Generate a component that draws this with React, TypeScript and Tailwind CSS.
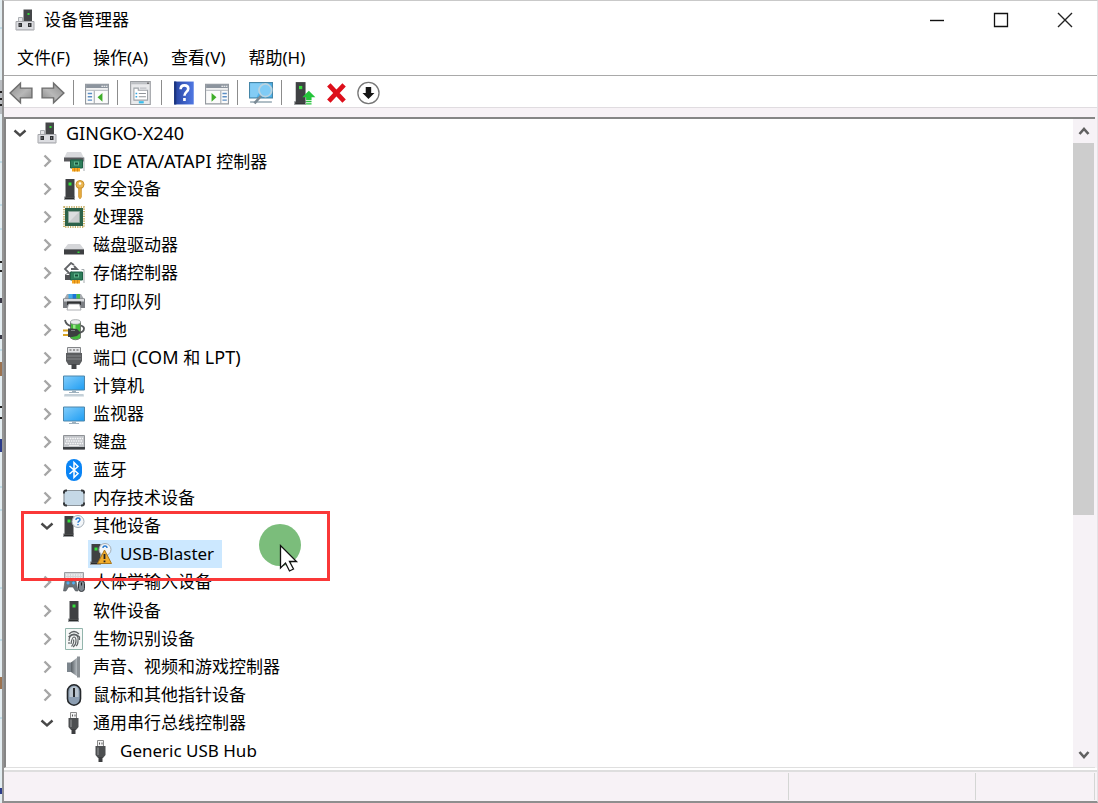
import type { ReactNode } from "react";
import clsx from "clsx";

type Device = {
  name: ReactNode;
  icon: ReactNode;
  level: 0 | 1 | 2;
  open?: boolean;
  selected?: boolean;
  marked?: boolean;
};

function Icon({ children, size = 22 }: { children: ReactNode; size?: number }) {
  return (
    <svg width={size} height={size} viewBox="0 0 22 22" fill="none" aria-hidden="true" className="shrink-0">
      {children}
    </svg>
  );
}

/* ---------- shared icon parts ---------- */

function Tower({ x = 0 }: { x?: number }) {
  return (
    <g transform={`translate(${x} 0)`}>
      <path d="M0 18.500h11V22H0z" fill="#9a9da0" />
      <path d="M1.500 1h9v18.500h-9z" fill="#3f4143" />
      <path d="M1 19.500h9v1.500H1z" fill="#2b2c2d" />
      <path d="M4.500 4.500h3v3h-3z" fill="#34e03c" />
    </g>
  );
}

function Card() {
  return (
    <>
      <path d="M7.500 10h12v8h-12z" fill="#2d7d5a" stroke="#1d6044" />
      <path d="M11 11.500h5v4h-5z" fill="#5fb98d" />
      <path d="M12 12.500h3v2h-3z" fill="#174d37" />
      <path d="M9 18h8v3.500H9z" fill="#f5a623" />
      <path d="M11.500 18v3.500M14.500 18v3.500" stroke="#c77d0c" strokeWidth=".7" />
      <path d="M18.500 7.500h2.500V21" stroke="#a5abae" />
    </>
  );
}

function UsbPlug() {
  return (
    <Icon>
      <path d="M7.500.5h6v6h-6z" fill="#f4f4f4" stroke="#8b8b8b" />
      <path d="M9 2.500h1v2H9zM11.500 2.500h1v2h-1z" fill="#555" />
      <path d="M5.500 6h10v9l-2.500 3H8l-2.500-3z" fill="#4d4f51" />
      <path d="M7 7.500h2V15H7z" fill="#737577" />
      <path d="M8.500 17h4v5h-4z" fill="#3d3e40" />
    </Icon>
  );
}

function Machine() {
  return (
    <Icon>
      <path d="M9.500.5h8.500V13H9.500z" fill="#444648" />
      <path d="M13.500 4h2v2h-2z" fill="#36d63c" />
      <path d="M4.500 8.500h4V13h-4z" fill="#e4e5e7" stroke="#adb0b4" />
      <path d="M2 12.500h18v8.500H2z" fill="#dcdde1" stroke="#a6a7ab" />
      <path d="M4.500 14h3.500v4H4.500zM14 14h3.500v4H14z" fill="#2f3133" />
      <path d="M5.500 15h1v2h-1zM15 15h1v2h-1z" fill="#77797d" />
      <path d="M2.500 20h17v1h-17z" fill="#b9babf" />
    </Icon>
  );
}

function Monitor({ base }: { base?: boolean }) {
  return (
    <Icon>
      <defs>
        <linearGradient id="screen" x1="0" y1="0" x2="1" y2="1">
          <stop offset="0" stopColor="#82cdfb" />
          <stop offset="1" stopColor="#1e9df3" />
        </linearGradient>
      </defs>
      <g transform={base ? "translate(0 -2)" : "translate(0 1)"}>
        <path d="M.5 3h21v14H.5z" fill="url(#screen)" stroke="#4c86ab" />
        <path d="M9 17.500h4V19H9z" fill="#9fb2bf" />
        <path d="M6 19h10v1H6z" fill="#9fb2bf" />
      </g>
      {base && <path d="M1.500 19h19l.5 2.500H1z" fill="#c4d0d8" />}
    </Icon>
  );
}

const IdeIcon = (
  <Icon>
    <path d="M4 2h14l3 6H1z" fill="#d9dadd" />
    <path d="M1 7.500h20v4H1z" fill="#58595c" />
    <Card />
  </Icon>
);

const SecurityIcon = (
  <Icon>
    <Tower x={1} />
    <circle cx="17" cy="6.500" r="4" fill="#eab651" stroke="#c88f2c" />
    <circle cx="17" cy="5.500" r="1.300" fill="#fff" />
    <path d="M15.500 10h3v9L17 21l-1.500-2z" fill="#e5a93c" stroke="#c98e2d" strokeWidth=".6" />
  </Icon>
);

const CpuIcon = (
  <Icon>
    <rect x="1" y="1" width="20" height="20" stroke="#b99a3c" strokeWidth="1.500" strokeDasharray="1.200 1.200" />
    <path d="M2 2h18v18H2z" fill="#2c6249" />
    <path d="M5.500 5.500h11v11h-11z" fill="#dcdede" stroke="#8fa79b" />
    <path d="M6 16 16 6v10z" fill="#c9cccc" />
  </Icon>
);

const DiskIcon = (
  <Icon>
    <path d="M5 10h12l4 5H1z" fill="#d5d6d9" />
    <path d="M1 15h20v5.500H1z" fill="#3e4042" />
    <path d="M1 15h20v1H1z" fill="#76787b" />
    <path d="M14.500 17.500h2v1.500h-2z" fill="#35dc3a" />
  </Icon>
);

const StorageIcon = (
  <Icon>
    <path d="m11 3-3-2-6 6 5 5 2-2M8 7h6l-3-3" stroke="#616366" strokeWidth="1.800" />
    <path d="M2 13h6v5H2z" fill="#505255" />
    <path d="m2 13 3-2 4 4" stroke="#77797c" />
    <Card />
  </Icon>
);

const PrinterIcon = (
  <Icon>
    <path d="M4 3h14l3 5H1z" fill="#a7abb0" />
    <path d="M5.500 3h4v5h-4z" fill="#41a9e8" />
    <path d="M9.500 3h4v5h-4z" fill="#1975da" />
    <path d="M13.500 3h3.500v5h-3.500z" fill="#48bd46" />
    <path d="M0 7.500h22V17H0z" fill="#7b7e83" />
    <path d="M1 8h20v2.500H1z" fill="#d8dadd" />
    <path d="M4 10.500h14V14H4z" fill="#2f3133" />
    <path d="M5.500 13h11l1.500 6H4z" fill="#fff" stroke="#999ca1" strokeWidth=".8" />
  </Icon>
);

const BatteryIcon = (
  <Icon>
    <path d="M7.500 3h10v16q-5 3.500-10 0z" fill="#42b83b" stroke="#6f7b6d" />
    <ellipse cx="12.500" cy="3" rx="5" ry="2.300" fill="#e9ecee" stroke="#84898d" strokeWidth=".7" />
    <path d="M10 6h2.500v7H10z" fill="#9bea8d" />
    <path d="M2 1q1 5 6 6M16 14q5-1 5-4.500 0-2-3-3" stroke="#55585a" strokeWidth="1.800" />
    <path d="M0 11.500h7M0 16h7" stroke="#d9a423" strokeWidth="2" />
    <path d="M5 9.500h4l5 .5 3.500 3.500-3.500 3.500-5 1H5z" fill="#3c3e40" />
    <path d="M8 11.500h4" stroke="#7d8083" />
  </Icon>
);

const PortIcon = (
  <Icon>
    <path d="M4.500.5h13V6h-13z" fill="#e4e5e7" stroke="#838588" />
    <path d="M6.500 2.500h2v1h-2zM10 2.500h2v1h-2zM13.500 2.500h2v1h-2z" fill="#555" />
    <path d="M3 6h16v8l-2.500 4h-11L3 14z" fill="#5b5d5f" />
    <path d="M4 9h14M4 12h14" stroke="#85878a" />
    <path d="M8.500 17h5v5h-5z" fill="#424446" />
  </Icon>
);

const KeyboardIcon = (
  <Icon>
    <path d="M.5 4.500h21V18H.5z" fill="#c3c6ca" stroke="#8f9296" />
    <path d="M2 7.500h18M3 10h17M2 12.500h18" stroke="#f5f6f7" strokeWidth="1.400" strokeDasharray="1.600 .8" />
    <path d="M6 14.500h10" stroke="#eee" />
    <path d="M0 16h22v2.500H0z" fill="#3c3f42" />
  </Icon>
);

const BluetoothIcon = (
  <Icon>
    <rect x="3" y="0" width="16" height="22" rx="8" fill="#0a84f5" />
    <path d="m6.500 7 8.500 7.500-4 4v-15l4 4L6.500 15" stroke="#fff" strokeWidth="1.500" />
  </Icon>
);

const MemoryIcon = (
  <Icon>
    <rect x="1" y="3.500" width="20" height="15" rx="2" fill="#c5d8e6" stroke="#8a939a" strokeWidth="1.200" />
    <path
      d="M1 6.500V5.500q0-2 2-2h1M18 3.500h1q2 0 2 2v1M21 15.500v1q0 2-2 2h-1M4 18.500H3q-2 0-2-2v-1"
      stroke="#35383b"
      strokeWidth="2"
    />
  </Icon>
);

const UnknownIcon = (
  <Icon>
    <Tower />
    <circle cx="15" cy="6.500" r="6" fill="#f3f6f9" stroke="#a3adb6" />
    <path d="M13 5q0-2 2-2t2 1.700c0 1.400-2 1.500-2 3M15 9v1.300" stroke="#2a7bd0" strokeWidth="1.400" />
  </Icon>
);

const WarningIcon = (
  <Icon>
    <Tower />
    <circle cx="15" cy="6.500" r="6" fill="#f3f6f9" stroke="#a3adb6" />
    <path d="M13 5q0-2 2-2t2 2" stroke="#2a7bd0" strokeWidth="1.400" />
    <path d="M14.500 7 21.500 20.500h-14z" fill="#f2ad2c" stroke="#a8761c" strokeLinejoin="round" />
    <path d="M14.500 11v5M14.500 17.500v1.700" stroke="#222" strokeWidth="1.800" />
  </Icon>
);

const HidIcon = (
  <Icon>
    <path d="M1.500 1.500h19v8h-19z" fill="#d2d4d7" stroke="#9b9ea2" />
    <path d="M3 4h16M3 7h16" stroke="#fff" strokeDasharray="1.500 1" />
    <path d="m.5 20 1.500-10L4.500 8h6L13 10l2 10h-2.500l-2.500-4H5.500L3 20z" fill="#6a7279" stroke="#505559" strokeWidth=".6" />
    <path d="M3.500 12h3M9 12h3M5 10.500v3M10.500 10.500v3" stroke="#53aef1" strokeWidth="1.500" />
    <rect x="15.500" y="9.500" width="6" height="11" rx="3" fill="#7e8891" stroke="#32363a" />
    <path d="M18.500 11.500v3" stroke="#222" />
  </Icon>
);

const SoftwareIcon = (
  <Icon>
    <Tower x={5} />
  </Icon>
);

const FingerprintIcon = (
  <Icon>
    <path d="M2.500.5h17v21h-17z" fill="#f6f8f7" stroke="#93b5ac" />
    <path
      d="M6 6q5-5 10 0M5.500 9q5.500-6 11 0v3M6 13q0-6 5-6t4 6q0 4-2 5M8 16q1-7 3-7t2 4q0 4-3 6M10.500 11.500q1 3-2 7M6 14v2"
      stroke="#5d6163"
      strokeWidth="1.200"
    />
  </Icon>
);

const SoundIcon = (
  <Icon>
    <defs>
      <linearGradient id="cone">
        <stop offset="0" stopColor="#596066" />
        <stop offset="1" stopColor="#c5cbd0" />
      </linearGradient>
    </defs>
    <path d="M4 6.500h5V16H4z" fill="#7c858d" />
    <path d="M8 6.500 15 1v20l-7-5z" fill="url(#cone)" />
    <path d="M14 .5h3v21h-3z" fill="#8b9196" />
  </Icon>
);

const MouseIcon = (
  <Icon>
    <rect x="4.500" y=".8" width="13" height="20.400" rx="6.500" fill="#8c9eb2" stroke="#25282b" strokeWidth="1.600" />
    <path d="M6.500 8q0-5 4.500-5.500T15.500 8v5h-9z" fill="#bac5cf" />
    <path d="M11 4v9" stroke="#26292c" strokeWidth="2" />
  </Icon>
);

function Latin({ children }: { children: ReactNode }) {
  return <span className="whitespace-pre text-[18px]">{children}</span>;
}

const devices: Device[] = [
  { name: <Latin>GINGKO-X240</Latin>, icon: <Machine />, level: 0, open: true },
  { name: <><Latin>IDE ATA/ATAPI </Latin>控制器</>, icon: IdeIcon, level: 1 },
  { name: "安全设备", icon: SecurityIcon, level: 1 },
  { name: "处理器", icon: CpuIcon, level: 1 },
  { name: "磁盘驱动器", icon: DiskIcon, level: 1 },
  { name: "存储控制器", icon: StorageIcon, level: 1 },
  { name: "打印队列", icon: PrinterIcon, level: 1 },
  { name: "电池", icon: BatteryIcon, level: 1 },
  { name: <>端口<Latin> (COM </Latin>和<Latin> LPT)</Latin></>, icon: PortIcon, level: 1 },
  { name: "计算机", icon: <Monitor base />, level: 1 },
  { name: "监视器", icon: <Monitor />, level: 1 },
  { name: "键盘", icon: KeyboardIcon, level: 1 },
  { name: "蓝牙", icon: BluetoothIcon, level: 1 },
  { name: "内存技术设备", icon: MemoryIcon, level: 1 },
  { name: "其他设备", icon: UnknownIcon, level: 1, open: true, marked: true },
  { name: "USB-Blaster", icon: WarningIcon, level: 2, selected: true },
  { name: "人体学输入设备", icon: HidIcon, level: 1 },
  { name: "软件设备", icon: SoftwareIcon, level: 1 },
  { name: "生物识别设备", icon: FingerprintIcon, level: 1 },
  { name: "声音、视频和游戏控制器", icon: SoundIcon, level: 1 },
  { name: "鼠标和其他指针设备", icon: MouseIcon, level: 1 },
  { name: "通用串行总线控制器", icon: <UsbPlug />, level: 1, open: true },
  { name: "Generic USB Hub", icon: <UsbPlug />, level: 2 },
];

const indent = ["pl-[3px]", "pl-[30px]", "pl-[82px]"];

function Chevron({ open }: { open?: boolean }) {
  return (
    <Icon>
      {open ? (
        <path d="m5.500 8.500 5.500 5 5.500-5" stroke="#484848" strokeWidth="2.400" />
      ) : (
        <path d="m8.500 5.500 5.500 5.500-5.500 5.500" stroke="#a6a6a6" strokeWidth="2.400" />
      )}
    </Icon>
  );
}

/* Red frame, click highlight and pointer drawn over the tree */
function Marker() {
  return (
    <div className="pointer-events-none absolute -top-px left-[15px] z-10 h-[70px] w-[309px] border-3 border-[#fa3838]">
      <svg width="48" height="54" viewBox="0 0 48 54" className="absolute left-[234px] top-2" aria-hidden="true">
        <circle cx="22" cy="23" r="21" fill="#7bbd7b" />
        <path d="M22.500 23.500v22.500l5-5 4 8 4-2-4-7.500h7z" fill="#fff" stroke="#111" strokeWidth="1.300" />
      </svg>
    </div>
  );
}

function DeviceRow({ device }: { device: Device }) {
  const { name, icon, level, open, selected, marked } = device;
  return (
    <li
      role="treeitem"
      aria-level={level + 1}
      aria-expanded={level < 2 ? !!open : undefined}
      aria-selected={!!selected}
      className={clsx("relative flex items-center", indent[level])}
    >
      {level < 2 && (
        <button type="button" aria-label={open ? "折叠" : "展开"} className="mr-[3px]">
          <Chevron open={open} />
        </button>
      )}
      <span className={clsx("flex h-7 items-center gap-2 whitespace-nowrap pl-[2px] pr-2", selected && "bg-[#cce8ff]")}>
        {icon}
        <span>{name}</span>
      </span>
      {marked && <Marker />}
    </li>
  );
}

/* ---------- toolbar ---------- */

function Arrow({ flip }: { flip?: boolean }) {
  return (
    <Icon size={24}>
      <defs>
        <linearGradient id="arrow" x1="0" y1="0" x2="1" y2="1">
          <stop offset="0" stopColor="#8a8a8a" />
          <stop offset=".55" stopColor="#b8b8b8" />
          <stop offset="1" stopColor="#858585" />
        </linearGradient>
      </defs>
      <path
        d="M1 11 10.500 2v4.500H21v9H10.500V20z"
        transform={flip ? "translate(22 0) scale(-1 1)" : undefined}
        fill="url(#arrow)"
        stroke="#6e6e6e"
        strokeWidth="1.300"
      />
    </Icon>
  );
}

function PaneIcon({ right }: { right?: boolean }) {
  return (
    <Icon size={24}>
      <path d="M.5 3h21v18H.5z" fill="#fbfbfb" stroke="#94999f" />
      <path d="M1 3h20v3.500H1z" fill="#8c949e" />
      <path d="M15 4.800h1.500M17 4.800h1.500M19 4.800h1.500" stroke="#fff" />
      <path d="M1 8.500h20" stroke="#b2b7bd" />
      {right ? (
        <>
          <path d="M14.500 9v12" stroke="#a5aab0" />
          <path d="M16 11.500h4M16 14.500h4M16 17.500h4" stroke="#5c8ec4" strokeWidth="1.300" />
          <path d="m6 11 4.500 4L6 19z" fill="#3fae2a" />
        </>
      ) : (
        <>
          <path d="M8.500 9v12" stroke="#a5aab0" />
          <path d="M2.500 11.500h4M2.500 14.500h4M2.500 17.500h4" stroke="#5c8ec4" strokeWidth="1.300" />
          <path d="m16 11-4.500 4 4.500 4z" fill="#3fae2a" />
        </>
      )}
    </Icon>
  );
}

function PropertiesIcon() {
  return (
    <Icon size={24}>
      <path d="M1.500.5h18v21h-18z" fill="#e9eaec" stroke="#9a9da1" />
      <path d="M2 2h17" stroke="#bcbfc3" strokeWidth="2" />
      <path d="M16.500 2h2" stroke="#555" />
      <path d="M4.500 6.500h4v2h8.500v9H4.500z" fill="#fff" stroke="#9ea3a8" />
      <path d="M10 6.500h6" stroke="#b5b9be" />
      <path d="M6 11.500h1.500M6 14.500h1.500" stroke="#36a5e0" strokeWidth="1.400" />
      <path d="M9 11.500h6.500M9 14.500h6.500" stroke="#8f9499" />
      <path d="M9 18.500h4.500v2H9z" fill="#35bdec" />
    </Icon>
  );
}

function HelpIcon() {
  return (
    <Icon size={24}>
      <defs>
        <linearGradient id="book">
          <stop offset="0" stopColor="#24419f" />
          <stop offset="1" stopColor="#5078e3" />
        </linearGradient>
      </defs>
      <path d="M1 .5h18v21H1z" fill="url(#book)" />
      <path d="M1 .5h2v21H1z" fill="#1c357f" />
      <path d="M7 7.500Q7 4 10.500 4T14 7c0 3-3.500 3-3.500 6.500M10.500 15.500v2.800" stroke="#fff" strokeWidth="2.400" />
    </Icon>
  );
}

function ScanIcon() {
  return (
    <Icon size={24}>
      <path d="M.5 1.500h21v14H.5z" fill="#4fb4ee" stroke="#4586a8" />
      <path d="M1 2h12L7 15H1z" fill="#83ccf5" />
      <path d="M1 18.500h20V20H1z" fill="#9fb0ba" />
      <path d="M11 13.500 5 20.500" stroke="#7b8a95" strokeWidth="2.400" />
      <circle cx="15" cy="8.500" r="5.800" fill="#7fcbf5" stroke="#b9d3e0" strokeWidth="1.600" />
    </Icon>
  );
}

function UpdateIcon() {
  return (
    <Icon size={24}>
      <Tower x={1} />
      <path d="m14.500 9 6 6H17v2.500h-5V15H8.500z" fill="#24c43a" />
      <path d="M12 18.800h5M12 21h5" stroke="#24c43a" strokeWidth="1.300" />
    </Icon>
  );
}

function RemoveIcon() {
  return (
    <Icon size={24}>
      <path d="m3.500 3.500 14 15M17.500 3.500l-14 15" stroke="#dd0f1b" strokeWidth="4.300" />
    </Icon>
  );
}

function DisableIcon() {
  return (
    <Icon size={24}>
      <circle cx="10.500" cy="11" r="9.700" fill="#fff" stroke="#777" strokeWidth="1.200" />
      <path d="M8 5.500h5V11h3l-5.500 5.500L5 11h3z" fill="#151515" />
    </Icon>
  );
}

function ToolButton({ label, children }: { label: string; children: ReactNode }) {
  return (
    <button type="button" aria-label={label} title={label} className="flex h-7 w-8 items-center justify-center">
      {children}
    </button>
  );
}

function Separator() {
  return <span className="ml-1 mr-[7px] h-[25px] w-px bg-[#8c8c8c]" />;
}

function TitleBar() {
  return (
    <header className="flex h-[38px] items-center pl-[10px]">
      <Machine />
      <h1 className="ml-2 flex-1">设备管理器</h1>
      <button type="button" aria-label="最小化" className="flex h-full w-16 items-center justify-center">
        <svg width="16" height="16" viewBox="0 0 16 16" fill="none">
          <path d="M1 8.500h14" stroke="#111" strokeWidth="1.400" />
        </svg>
      </button>
      <button type="button" aria-label="最大化" className="flex h-full w-16 items-center justify-center">
        <svg width="16" height="16" viewBox="0 0 16 16" fill="none">
          <path d="M1.500 1.500h13v13h-13z" stroke="#111" strokeWidth="1.300" />
        </svg>
      </button>
      <button type="button" aria-label="关闭" className="flex h-full w-16 items-center justify-center">
        <svg width="16" height="16" viewBox="0 0 16 16" fill="none">
          <path d="m1 1 14 14M15 1 1 15" stroke="#222" strokeWidth="1.400" />
        </svg>
      </button>
    </header>
  );
}

/* Sliver of the window lying behind this one */
function BackWindowEdge() {
  return (
    <div className="relative w-[2px] shrink-0 overflow-hidden bg-[#e3edf1]" aria-hidden="true">
      <svg width="2" height="803" viewBox="0 0 2 803" className="absolute left-0 top-0">
        <path d="M0 80h2v34H0z" fill="#b9bcc0" />
        <path d="M0 91h2v2H0zM0 98h2v2H0zM0 104h2v2H0zM0 261h2v2H0zM0 270h2v2H0zM0 406h2v2H0zM0 417h2v2H0z" fill="#222" />
        <path d="M0 298h2v5H0zM0 335h2v4H0z" fill="#3a3a48" />
        <path d="M0 362h2v14H0zM0 677h2v12H0z" fill="#9c7350" />
        <path d="M0 439h2v13H0zM0 788h2v6H0z" fill="#2c3c8a" />
        <path d="M0 28h2M0 162h2M0 205h2M0 229h2M0 350h2M0 487h2M0 510h2M0 588h2M0 640h2M0 718h2" stroke="#9ecbdc" />
      </svg>
    </div>
  );
}

export default function App() {
  return (
    <div className="flex min-h-screen bg-white font-['Noto_Sans','Noto_Sans_CJK_SC',sans-serif] text-[17px] leading-6 text-black">
      <BackWindowEdge />
      <div className="flex min-w-0 flex-1 flex-col border-b-2 border-l-2 border-r border-t border-b-[#8e8e8e] border-l-[#949494] border-r-[#e4e2e5] border-t-[#c9c9c9]">
        <TitleBar />

        <nav className="flex h-9 items-center gap-[23px] pl-[13px] pt-px">
          <button type="button">文件(F)</button>
          <button type="button">操作(A)</button>
          <button type="button">查看(V)</button>
          <button type="button">帮助(H)</button>
        </nav>

        <div className="flex h-[33px] items-center border-b border-t border-b-[#e0dce0] border-t-[#a9a9a9] pl-px pt-[2px]">
          <ToolButton label="后退"><Arrow /></ToolButton>
          <ToolButton label="前进"><Arrow flip /></ToolButton>
          <Separator />
          <ToolButton label="显示/隐藏控制台树"><PaneIcon /></ToolButton>
          <Separator />
          <ToolButton label="属性"><PropertiesIcon /></ToolButton>
          <Separator />
          <ToolButton label="帮助"><HelpIcon /></ToolButton>
          <ToolButton label="显示/隐藏操作窗格"><PaneIcon right /></ToolButton>
          <Separator />
          <ToolButton label="扫描检测硬件改动"><ScanIcon /></ToolButton>
          <Separator />
          <ToolButton label="更新驱动程序"><UpdateIcon /></ToolButton>
          <ToolButton label="卸载设备"><RemoveIcon /></ToolButton>
          <ToolButton label="禁用设备"><DisableIcon /></ToolButton>
        </div>

        <main className="flex flex-1 flex-col bg-[#f7f2f6] pr-[2px] pt-[9px]">
          <div className="flex flex-1 border-b border-l-2 border-t-2 border-b-[#dfdfdf] border-l-[#858585] border-t-[#858585] bg-white">
            <ul role="tree" aria-label="设备" className="grid flex-1 auto-rows-fr pb-[2px]">
              {devices.map((device, i) => (
                <DeviceRow key={i} device={device} />
              ))}
            </ul>
            <div className="flex w-[22px] flex-col bg-[#f6f2f6]">
              <button type="button" aria-label="向上滚动" className="flex h-6 items-center justify-center">
                <svg width="12" height="10" viewBox="0 0 12 10" fill="none">
                  <path d="m1.500 8 4.500-5 4.500 5" stroke="#606060" strokeWidth="2.600" />
                </svg>
              </button>
              <div className="flex-1">
                <div className="mr-px h-[62%] bg-[#cdcdcd]" />
              </div>
              <button type="button" aria-label="向下滚动" className="flex h-6 items-center justify-center">
                <svg width="12" height="10" viewBox="0 0 12 10" fill="none">
                  <path d="m1.500 2 4.500 5 4.500-5" stroke="#606060" strokeWidth="2.600" />
                </svg>
              </button>
            </div>
          </div>
        </main>

        <footer className="flex h-[33px] border-t-2 border-white bg-[#f7f2f6]">
          <div className="flex flex-1 border-t-2 border-[#dedede] pb-px pt-px">
            <span className="flex-1 border-r border-[#d4d6d4]" />
            <span className="w-[187px] border-r border-[#d4d6d4]" />
            <span className="mr-[2px] w-[119px] border-r border-[#d4d6d4]" />
          </div>
        </footer>
      </div>
    </div>
  );
}
